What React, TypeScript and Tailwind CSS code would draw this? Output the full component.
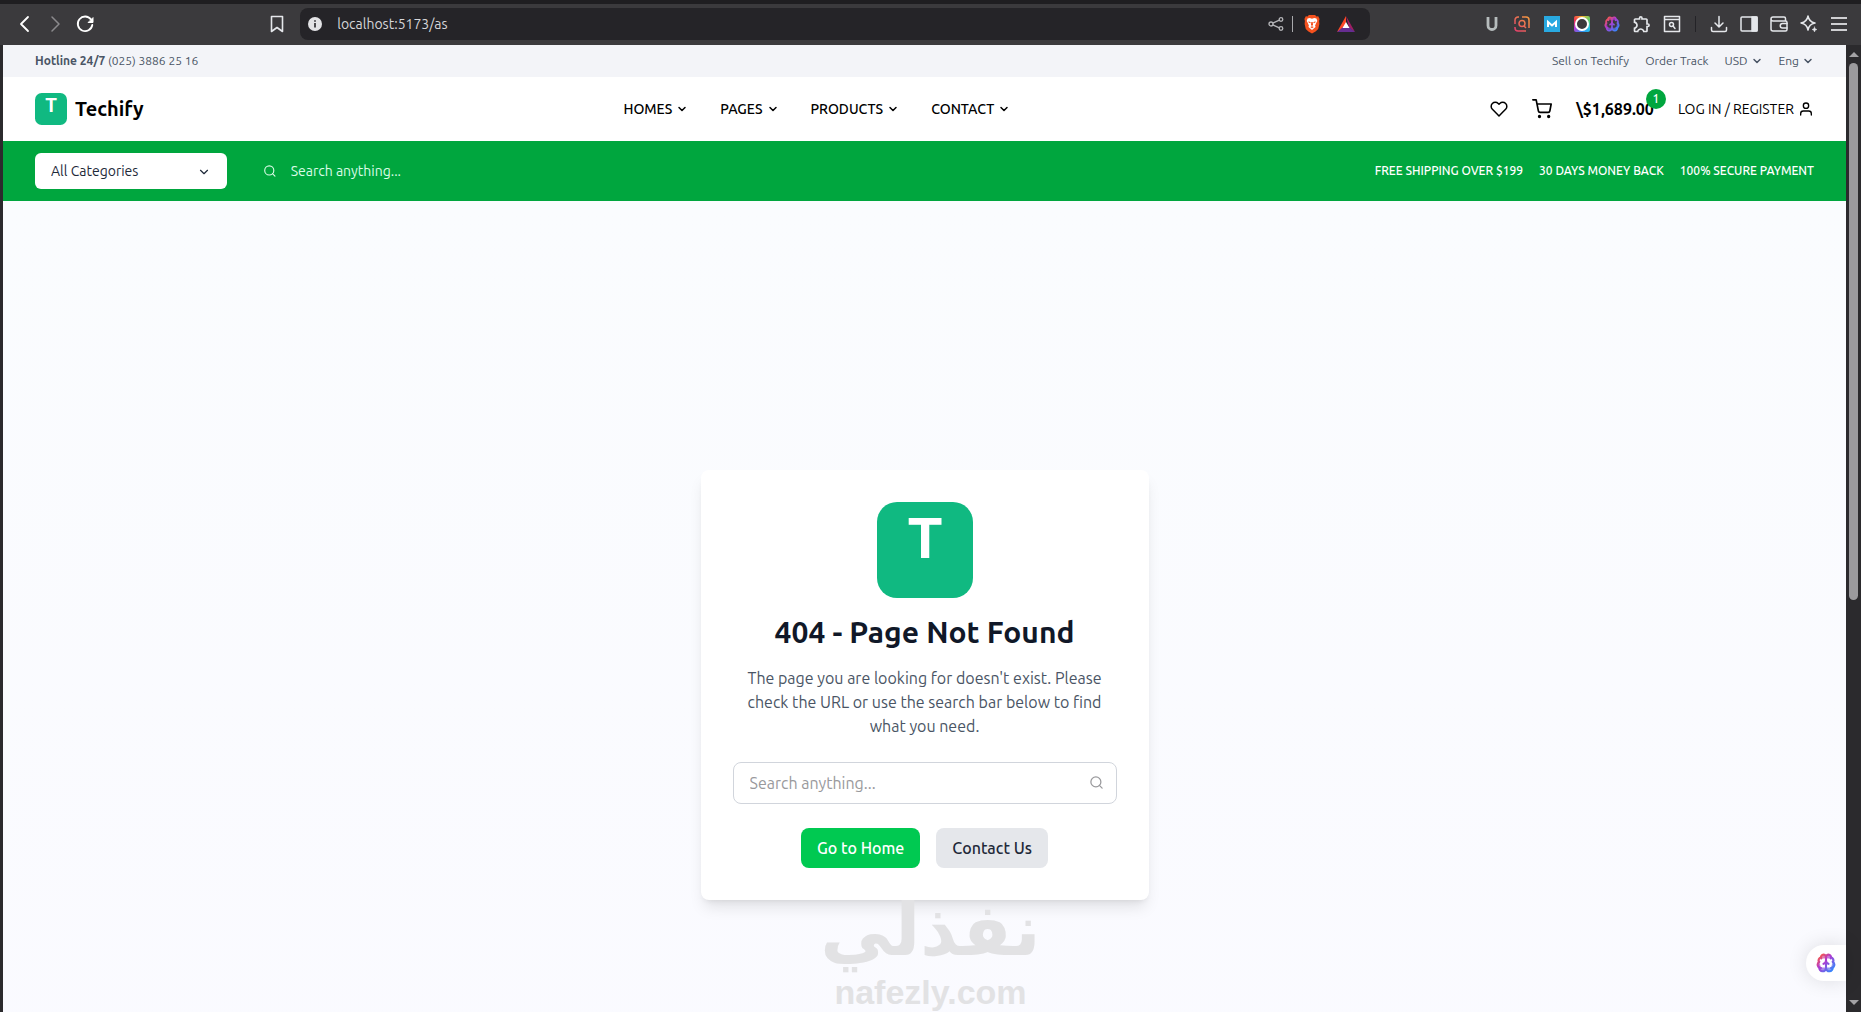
import type { ReactNode } from "react";
import { FiChevronDown, FiHeart, FiSearch, FiShoppingCart, FiUser } from "react-icons/fi";
import { MdOutlineExtension } from "react-icons/md";
import { Brain } from "lucide-react";

const navLinks = ["HOMES", "PAGES", "PRODUCTS", "CONTACT"];
const perks = ["FREE SHIPPING OVER $199", "30 DAYS MONEY BACK", "100% SECURE PAYMENT"];

function Logo({ className }: { className: string }) {
  return (
    <svg viewBox="0 0 96 96" className={className} role="img" aria-label="Techify logo">
      <rect width="96" height="96" rx="20" fill="#10b981" />
      <text x="48" y="56" textAnchor="middle" fontSize="55" className="fill-white font-[Inter,sans-serif] font-bold">
        T
      </text>
    </svg>
  );
}

function BrainIcon({ size }: { size: number }) {
  return (
    <Brain
      size={size}
      color="url(#brain-gradient)"
      fill="url(#brain-gradient)"
      fillOpacity={0.7}
      strokeWidth={2.5}
      aria-hidden="true"
    />
  );
}

function BarButton({ label, children }: { label: string; children: ReactNode }) {
  return (
    <button type="button" aria-label={label} className="flex h-8 w-[30px] shrink-0 items-center justify-center">
      {children}
    </button>
  );
}

function Line({ children, className = "" }: { children: ReactNode; className?: string }) {
  return (
    <svg
      width="20"
      height="20"
      viewBox="0 0 20 20"
      fill="none"
      stroke="currentColor"
      strokeWidth="1.5"
      strokeLinecap="round"
      strokeLinejoin="round"
      className={className}
    >
      {children}
    </svg>
  );
}

function BrowserBar() {
  return (
    <div className="flex h-[45px] shrink-0 items-center border-t-4 border-[#1f1e21] bg-[#3b3a3d] pb-[2px] pl-[10px] pr-[7px] text-gray-200">
      <BarButton label="Back">
        <Line className="text-white"><path d="M13 3 6 10l7 7" strokeWidth="1.8" /></Line>
      </BarButton>
      <BarButton label="Forward">
        <Line className="text-[#8b8a8d]"><path d="m7 3 7 7-7 7" /></Line>
      </BarButton>
      <BarButton label="Reload">
        <Line className="text-white">
          <path d="M16 5.500A7.300 7.300 0 1 0 17.300 11" strokeWidth="1.8" />
          <path d="M18 4v4.500h-4.500z" fill="currentColor" strokeWidth="1" />
        </Line>
      </BarButton>
      <div className="flex-[162]" />
      <div className="flex flex-[1106] items-center gap-2">
        <BarButton label="Bookmark">
          <Line><path d="M4.500 2.500h11v15L10 13.500l-5.500 4z" strokeWidth="1.6" /></Line>
        </BarButton>
        <div className="flex h-8 flex-1 items-center rounded-lg bg-[#252428] pl-2 pr-[5px]">
          <svg width="14" height="14" viewBox="0 0 14 14" className="shrink-0">
            <circle cx="7" cy="7" r="7" fill="#e3e3e6" />
            <path d="M7 6v4.500M7 3.200v1.500" stroke="#252428" strokeWidth="1.600" />
          </svg>
          <input
            type="text"
            aria-label="Address"
            defaultValue="localhost:5173/as"
            className="ml-[15px] min-w-0 flex-1 bg-transparent text-sm text-[#d6d6d9] outline-none"
          />
          <button type="button" aria-label="Share" className="px-2 text-[#b5b5b8]">
            <svg width="16" height="16" viewBox="0 0 16 16" fill="none" stroke="currentColor" strokeWidth="1.3">
              <circle cx="3" cy="8" r="2" />
              <circle cx="13" cy="3.500" r="1.800" />
              <circle cx="13" cy="12.500" r="1.800" />
              <path d="m4.800 7.200 6.500-3M4.800 8.800l6.500 3" />
            </svg>
          </button>
          <span className="mr-1 h-4 w-px bg-[#a9a9ac]" />
          <BarButton label="Shields">
            <svg width="16" height="20" viewBox="0 0 18 20" preserveAspectRatio="none">
              <path d="M5.500 1h7l1.500 1.500 2-.2L17.500 5l-.5 2 .3 3-1.300 5-3 2.500-4 2-4-2-3-2.500L.700 10 1 7 .5 5 2 2.300l2 .2z" fill="#f4511e" />
              <path d="M4 4.500 6.500 4 9 4.800 11.500 4l2.500.5 1 2.500-1 1.500-1.500 3 .5 1.500-2 1.500L9 16l-2-1.500L5 13l.5-1.500L4 8.500 3 7z" fill="#fff" />
              <path d="m5 7.300 2.500 1-.3 1-2-.8zm8 0-2.500 1 .3 1 2-.8zM8.200 8h1.600l.4 3-1.200 1-1.200-1zM7 13l2-.7 2 .7-2 1.300z" fill="#f4511e" />
            </svg>
          </BarButton>
          <div className="ml-1 mr-1 flex">
            <BarButton label="Rewards">
              <svg width="20" height="18" viewBox="0 0 20 18">
                <path d="M10 1 1 17l9-4z" fill="#ff4724" />
                <path d="m10 1 9 16-6-4.500z" fill="#9e1f63" />
                <path d="M1 17h18l-6-5H7z" fill="#662d91" />
                <path d="m10 7 3.500 6h-7z" fill="#fff" />
              </svg>
            </BarButton>
          </div>
        </div>
      </div>
      <div className="flex-[107]" />
      <BarButton label="Underline extension">
        <svg width="14" height="16" viewBox="0 0 14 16" fill="none" stroke="#b6bcbd" strokeWidth="2.800">
          <path d="M3 1v8.500a4 4 0 0 0 8 0V1" />
        </svg>
      </BarButton>
      <BarButton label="Image search extension">
        <svg width="16" height="16" viewBox="0 0 16 16" fill="none" stroke="url(#warm-gradient)" strokeWidth="1.500">
          <path d="M5 1H4a3 3 0 0 0-3 3v4M8 1h4a3 3 0 0 1 3 3v8M1 11v1a3 3 0 0 0 3 3h8" />
          <circle cx="8" cy="7.500" r="3" />
          <path d="m10 10 2 2" />
        </svg>
      </BarButton>
      <BarButton label="Mail extension">
        <svg width="16" height="16" viewBox="0 0 16 16">
          <rect width="16" height="16" fill="#29a9e1" />
          <path d="M4 11V6l4 3.500L12 6v5" fill="none" stroke="#fff" strokeWidth="2" />
        </svg>
      </BarButton>
      <BarButton label="Capture extension">
        <span className="flex size-4 items-center justify-center rounded-xs bg-[conic-gradient(#f5b62f,#5fd068,#28c5e8,#2d8cf0,#b43fd6,#f0344f,#f5b62f)]">
          <span className="size-[14px] rounded-full border-2 border-white bg-[#3b3a3d]" />
        </span>
      </BarButton>
      <BarButton label="Brain extension">
        <BrainIcon size={16} />
      </BarButton>
      <BarButton label="Extensions">
        <MdOutlineExtension size={20} />
      </BarButton>
      <BarButton label="Search tabs">
        <Line>
          <path d="M2.500 2.500h15v15h-15zM2.500 5.500h15" />
          <circle cx="9.500" cy="10.500" r="2" />
          <path d="m11 12 2 2.500" />
        </Line>
      </BarButton>
      <span className="mx-[8px] h-4 w-px bg-[#242327]" />
      <BarButton label="Downloads">
        <Line><path d="M10 2.500v10M6 9l4 4 4-4M2.500 13.500V16a1.500 1.500 0 0 0 1.500 1.500h12a1.500 1.500 0 0 0 1.500-1.500v-2.500" /></Line>
      </BarButton>
      <BarButton label="Sidebar">
        <Line>
          <rect x="2" y="3" width="16" height="14" rx="1" />
          <path d="M13 3h5v14h-5z" fill="currentColor" />
        </Line>
      </BarButton>
      <BarButton label="Wallet">
        <Line>
          <path d="M16.500 7V4.500a1.500 1.500 0 0 0-1.500-1.500H4a2 2 0 0 0 0 4h12.500a1.500 1.500 0 0 1 1.500 1.500v7a1.500 1.500 0 0 1-1.500 1.500H4a2 2 0 0 1-2-2V5" />
          <path d="M18 9.500h-4.500a2.200 2.200 0 0 0 0 4.500H18" />
        </Line>
      </BarButton>
      <BarButton label="Assistant">
        <Line>
          <path d="M9 2c.7 4 3 6.300 7 7-4 .7-6.300 3-7 7-.7-4-3-6.300-7-7 4-.7 6.300-3 7-7z" />
          <path d="M15.500 13c.3 1.500 1 2.200 2.500 2.500-1.500.3-2.200 1-2.500 2.500-.3-1.500-1-2.200-2.500-2.500 1.500-.3 2.200-1 2.500-2.500z" fill="currentColor" strokeWidth="0.500" />
        </Line>
      </BarButton>
      <BarButton label="Menu">
        <svg width="16" height="16" viewBox="0 0 16 16" stroke="#cfcfd2" strokeWidth="1.800">
          <path d="M0 2h16M0 8h16M0 14h16" />
        </svg>
      </BarButton>
    </div>
  );
}

function TopBar() {
  return (
    <div className="flex h-8 items-center justify-between bg-[#f3f4f8] px-8 text-xs text-gray-600">
      <p>
        <span className="font-bold">Hotline 24/7</span> (025) 3886 25 16
      </p>
      <div className="flex items-center gap-4">
        <a href="#sell">Sell on Techify</a>
        <a href="#track">Order Track</a>
        <button type="button" className="flex items-center gap-[3px]">
          USD <FiChevronDown size={12} strokeWidth={3} />
        </button>
        <button type="button" className="flex items-center gap-[3px]">
          Eng <FiChevronDown size={12} strokeWidth={3} />
        </button>
      </div>
    </div>
  );
}

function Header() {
  return (
    <header className="flex h-16 items-center justify-between bg-white px-8 text-black">
      <a href="#home" className="flex items-center gap-2">
        <Logo className="size-8" />
        <span className="text-xl font-semibold">Techify</span>
      </a>
      <nav className="flex items-center gap-8 text-sm font-medium">
        {navLinks.map((link) => (
          <a key={link} href={`#${link.toLowerCase()}`} className="flex items-center gap-1">
            {link} <FiChevronDown size={12} strokeWidth={3} />
          </a>
        ))}
      </nav>
      <div className="flex items-center gap-6">
        <button type="button" aria-label="Wishlist">
          <FiHeart size={18} />
        </button>
        <button type="button" className="relative flex items-center gap-6">
          <FiShoppingCart size={20} aria-label="Cart" />
          <span className="font-semibold">\$1,689.00</span>
          <span className="absolute -right-3 -top-2 flex size-5 items-center justify-center rounded-full bg-green-600 text-xs font-medium text-white">
            1
          </span>
        </button>
        <a href="#login" className="flex items-center gap-1 text-sm">
          LOG IN / REGISTER <FiUser size={16} />
        </a>
      </div>
    </header>
  );
}

function SearchBar() {
  return (
    <div className="flex h-[60px] items-center bg-green-600 px-8">
      <div className="relative w-48">
        <select
          aria-label="Category"
          className="h-9 w-full appearance-none rounded-md bg-white px-4 text-sm text-gray-800 outline-none"
        >
          <option>All Categories</option>
        </select>
        <FiChevronDown size={14} className="pointer-events-none absolute right-4 top-3 text-gray-800" />
      </div>
      <label className="ml-9 flex flex-1 items-center gap-[14px] text-green-100">
        <FiSearch size={14} />
        <input
          type="text"
          aria-label="Search products"
          placeholder="Search anything..."
          className="w-full bg-transparent text-sm outline-none placeholder:text-green-100"
        />
      </label>
      <ul className="flex gap-4 text-xs font-medium text-white">
        {perks.map((perk) => (
          <li key={perk}>{perk}</li>
        ))}
      </ul>
    </div>
  );
}

function NotFoundCard() {
  return (
    <div className="w-full max-w-md rounded-lg bg-white p-8 text-center shadow-lg">
      <Logo className="mx-auto size-24" />
      <h1 className="mt-4 text-3xl font-semibold text-gray-900">404 - Page Not Found</h1>
      <p className="mt-4 text-gray-600">
        The page you are looking for doesn't exist. Please check the URL or use the search bar below to find what you
        need.
      </p>
      <label className="mt-6 flex h-[42px] items-center rounded-lg border border-gray-300 pl-4 pr-3 text-[#99999c]">
        <input
          type="text"
          aria-label="Search"
          placeholder="Search anything..."
          className="min-w-0 flex-1 bg-transparent outline-none placeholder:text-[#99999c]"
        />
        <FiSearch size={15} />
      </label>
      <div className="mt-6 flex justify-center gap-4 font-medium">
        <a href="#home" className="rounded-lg bg-green-500 px-4 py-2 text-white">
          Go to Home
        </a>
        <a href="#contact" className="rounded-lg bg-gray-200 px-4 py-2 text-gray-800">
          Contact Us
        </a>
      </div>
    </div>
  );
}

function Scrollbar() {
  return (
    <div className="flex w-[15px] shrink-0 flex-col items-center bg-[#2b2a2d] py-1" aria-hidden="true">
      <svg width="10" height="12" viewBox="0 0 10 12" fill="#a3a2a5">
        <path d="M5 3l5 5H0z" />
      </svg>
      <div className="mt-[2px] w-[9px] flex-[536] rounded-full bg-[#9b9a9d]" />
      <div className="flex-[396]" />
      <svg width="10" height="12" viewBox="0 0 10 12" fill="#a3a2a5">
        <path d="M0 4h10L5 9z" />
      </svg>
    </div>
  );
}

export default function App() {
  return (
    <div className="relative flex h-screen flex-col overflow-hidden bg-[#2b2a2d] font-[Ubuntu,'Open_Sans',sans-serif]">
      {/* Shared gradients for the small coloured icons */}
      <svg width="0" height="0" className="absolute">
        <defs>
          <linearGradient id="brain-gradient" gradientUnits="userSpaceOnUse" x1="3" y1="3" x2="21" y2="21">
            <stop offset="0" stopColor="#ff5a3c" />
            <stop offset="0.400" stopColor="#b03ad0" />
            <stop offset="1" stopColor="#2f8cff" />
          </linearGradient>
          <linearGradient id="warm-gradient" gradientUnits="userSpaceOnUse" x1="0" y1="16" x2="16" y2="0">
            <stop offset="0" stopColor="#e0366f" />
            <stop offset="1" stopColor="#f6a13c" />
          </linearGradient>
        </defs>
      </svg>

      <BrowserBar />

      <div className="flex min-h-0 flex-1 pl-[3px]">
        <div className="min-w-0 flex-1 overflow-hidden bg-[#fafafe]">
          <TopBar />
          <Header />
          <SearchBar />
          <main className="flex min-h-[calc(100vh-45px)] items-center justify-center bg-linear-to-b from-[#fafcfe] to-[#fafaff]">
            <NotFoundCard />
          </main>
        </div>
        <Scrollbar />
      </div>

      {/* Watermark */}
      <div className="pointer-events-none absolute inset-x-0 bottom-0 flex flex-col items-center font-bold text-[#e2e2e4]">
        <span lang="ar" dir="rtl" className="font-['DejaVu_Sans',sans-serif] text-7xl leading-[84px]">
          نفذلي
        </span>
        <span className="font-['Liberation_Sans',sans-serif] text-[34px] leading-10">nafezly.com</span>
      </div>

      <button
        type="button"
        aria-label="Open assistant"
        className="absolute bottom-[31px] right-[15px] flex h-9 w-10 items-center rounded-l-full bg-white pl-[10px] shadow-[0_0_20px_rgba(0,0,0,0.12)]"
      >
        <BrainIcon size={20} />
      </button>
    </div>
  );
}
